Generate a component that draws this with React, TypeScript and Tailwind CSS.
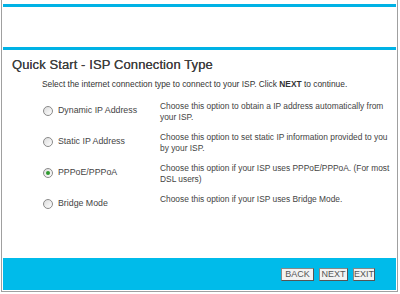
import React from 'react';

const options = [
  { label: 'Dynamic IP Address', desc: ['Choose this option to obtain a IP address automatically from', 'your ISP.'], checked: false },
  { label: 'Static IP Address', desc: ['Choose this option to set static IP information provided to you', 'by your ISP.'], checked: false },
  { label: 'PPPoE/PPPoA', desc: ['Choose this option if your ISP uses PPPoE/PPPoA. (For most', 'DSL users)'], checked: true },
  { label: 'Bridge Mode', desc: ['Choose this option if your ISP uses Bridge Mode.'], checked: false },
];

function Radio({ checked }: { checked: boolean }) {
  return (
    <span className="w-[10px] h-[10px] rounded-full border border-[#8a8a8a] bg-gradient-to-br from-[#dcdcdc] to-white flex items-center justify-center shrink-0">
      {checked && <span className="w-[4px] h-[4px] rounded-full bg-[#2f9a2f]" />}
    </span>
  );
}

function Btn({ children, w }: { children: React.ReactNode; w: string }) {
  return (
    <button className={`${w} h-[13px] bg-[#f2f2f2] border border-[#888] border-r-[#555] border-b-[#555] text-[9px] leading-none text-[#555] flex items-center justify-center`}>
      {children}
    </button>
  );
}

export default function App() {
  return (
    <div className="w-[400px] h-[294px] bg-white overflow-hidden" style={{ fontFamily: '"Liberation Sans", Arial, sans-serif' }}>
      <div className="ml-[1px] w-[397px] h-[292px] border-l border-r border-b border-[#a0a0a0] flex flex-col px-[1px]">
        <div className="h-[4px]" />
        <div className="h-[3px] bg-[#00b2e5]" />
        <div className="h-[40px]" />
        <div className="h-[3px] bg-[#00b2e5]" />

        <div className="flex-1 flex flex-col">
          <div className="pl-[9px] pt-[7px] text-[13px] leading-[15px] text-[#3f3f3f] tracking-[0.1px] [text-shadow:0_0_0.4px_#3f3f3f]">
            Quick Start - ISP Connection Type
          </div>
          <div className="pl-[39px] pt-[7px] text-[8.4px] leading-[10px] text-[#333]">
            Select the internet connection type to connect to your ISP. Click <b>NEXT</b> to continue.
          </div>

          <div className="flex flex-col pt-[11px]">
            {options.map((o) => (
              <div key={o.label} className="flex h-[31px]">
                <div className="w-[157px] pl-[40px] flex items-center gap-[5px] h-[22px] text-[8.8px] text-[#444]">
                  <Radio checked={o.checked} />
                  <span>{o.label}</span>
                </div>
                <div className="text-[8.4px] leading-[11px] text-[#444] pt-[1px]">
                  {o.desc.map((l) => (
                    <div key={l}>{l}</div>
                  ))}
                </div>
              </div>
            ))}
          </div>
        </div>

        <div className="h-[32px] bg-[#00bbea] flex items-center justify-end gap-[5px] pr-[21px] mb-[1px]">
          <Btn w="w-[33px]">BACK</Btn>
          <Btn w="w-[29px]">NEXT</Btn>
          <Btn w="w-[22px]">EXIT</Btn>
        </div>
      </div>
    </div>
  );
}
